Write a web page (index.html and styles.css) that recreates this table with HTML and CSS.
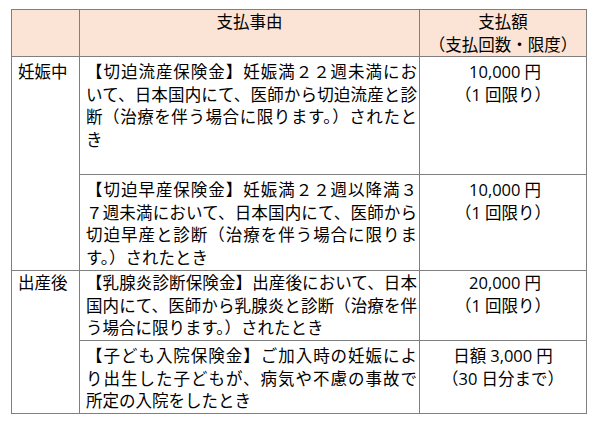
FILE: index.html
```html
<!DOCTYPE html>
<html lang="ja">
<head>
<meta charset="utf-8">
<title>支払事由</title>
<link rel="stylesheet" href="styles.css">
</head>
<body>
<table class="pay">
  <colgroup>
    <col class="c1">
    <col class="c2">
    <col class="c3">
  </colgroup>
  <thead>
    <tr class="rh">
      <th></th>
      <th>支払事由</th>
      <th>支払額<br>（支払回数・限度）</th>
    </tr>
  </thead>
  <tbody>
    <tr class="r1">
      <td class="cat" rowspan="2">妊娠中</td>
      <td class="desc">
        <span class="ln j">【切迫流産保険金】妊娠満２２週未満にお</span>
        <span class="ln j">いて、日本国内にて、医師から切迫流産と診</span>
        <span class="ln j">断（治療を伴う場合に限ります。）されたと</span>
        <span class="ln">き</span>
      </td>
      <td class="amt"><span class="n">10,000</span>円<br>（<span class="n r">1</span>回限り）</td>
    </tr>
    <tr class="r2">
      <td class="desc">
        <span class="ln j">【切迫早産保険金】妊娠満２２週以降満３</span>
        <span class="ln j">７週未満において、日本国内にて、医師から</span>
        <span class="ln j">切迫早産と診断（治療を伴う場合に限りま</span>
        <span class="ln">す。）されたとき</span>
      </td>
      <td class="amt"><span class="n">10,000</span>円<br>（<span class="n r">1</span>回限り）</td>
    </tr>
    <tr class="r3">
      <td class="cat" rowspan="2">出産後</td>
      <td class="desc">
        <span class="ln j">【乳腺炎診断保険金】出産後において、日本</span>
        <span class="ln j">国内にて、医師から乳腺炎と診断（治療を伴</span>
        <span class="ln">う場合に限ります。）されたとき</span>
      </td>
      <td class="amt"><span class="n">20,000</span>円<br>（<span class="n r">1</span>回限り）</td>
    </tr>
    <tr class="r4">
      <td class="desc">
        <span class="ln j">【子ども入院保険金】ご加入時の妊娠によ</span>
        <span class="ln j">り出生した子どもが、病気や不慮の事故で</span>
        <span class="ln">所定の入院をしたとき</span>
      </td>
      <td class="amt">日額<span class="n">3,000</span>円<br>（<span class="n r">30</span>日分まで）</td>
    </tr>
  </tbody>
</table>
</body>
</html>
```
FILE: styles.css
```css
html, body {
  margin: 0;
  padding: 0;
  background: #ffffff;
}

body {
  font-family: "Open Sans", "Noto Sans CJK JP", sans-serif;
  font-size: 16.5px;
  line-height: 22.5px;
  color: #000000;
}

.pay {
  border-collapse: collapse;
  table-layout: fixed;
  width: 575px;
  margin: 9px 0 0 11px;
}

.c1 { width: 68px; }
.c2 { width: 340px; }
.c3 { width: 167px; }

.pay th,
.pay td {
  border: 1px solid #7f7f7f;
  vertical-align: top;
  padding: 4px 2px 0 6px;
  font-weight: normal;
}

.pay th {
  background: #fbe4d5;
  text-align: center;
  padding: 1px 0 0 0;
}

.rh { height: 47px; }
.r1 { height: 118px; }
.r2 { height: 96px; }
.r3 { height: 70px; }
.r4 { height: 71px; }

.r3 td { padding-top: 1px; }

.cat {
  padding-left: 6px;
}

.ln {
  display: block;
  white-space: nowrap;
}

.j {
  white-space: normal;
  text-align: justify;
  text-align-last: justify;
}

.pay td.amt {
  text-align: center;
  padding-left: 0;
  padding-right: 0;
}

.n {
  margin: 0 4px;
}

.n.r {
  margin-left: 0;
}
```
